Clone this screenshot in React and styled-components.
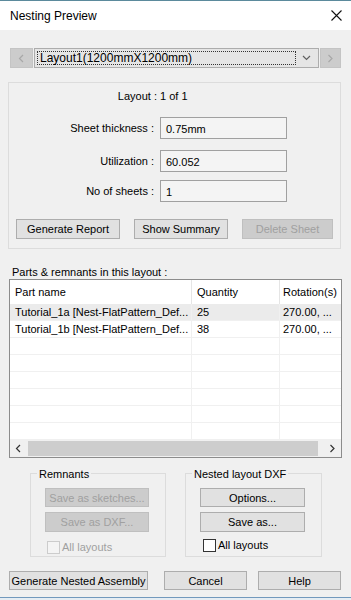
import React from "react";
import styled, { createGlobalStyle } from "styled-components";

const GlobalStyle = createGlobalStyle`
  html, body {
    margin: 0;
    padding: 0;
    background: #f0f0f0;
  }
  body {
    font-family: "Liberation Sans", Arial, sans-serif;
    font-size: 11px;
    color: #000;
  }
  * {
    box-sizing: border-box;
  }
`;

const rows = [
  { name: "Tutorial_1a [Nest-FlatPattern_Def...", qty: "25", rot: "270.00, ...", selected: true },
  { name: "Tutorial_1b [Nest-FlatPattern_Def...", qty: "38", rot: "270.00, ..." },
  {},
  {},
  {},
  {},
  {},
  {},
];

function CloseIcon() {
  return (
    <svg width="11" height="11" viewBox="0 0 11 11">
      <path d="M0.5 0.5 L10.5 10.5 M10.5 0.5 L0.5 10.5" stroke="#111" strokeWidth="1.1" fill="none" />
    </svg>
  );
}

function Chevron({ dir = "down", color = "#606060" }) {
  const d =
    dir === "down"
      ? "M1 1 L4.5 4.5 L8 1"
      : dir === "left"
      ? "M5 1 L1.5 4.5 L5 8"
      : "M1.5 1 L5 4.5 L1.5 8";
  const w = dir === "down" ? 9 : 7;
  const h = dir === "down" ? 6 : 9;
  return (
    <svg width={w} height={h} viewBox={`0 0 ${w} ${h}`}>
      <path d={d} stroke={color} strokeWidth="1.2" fill="none" />
    </svg>
  );
}

function App() {
  return (
    <>
      <GlobalStyle />
      <Window>
        <TitleBar>
          <span>Nesting Preview</span>
          <CloseButton>
            <CloseIcon />
          </CloseButton>
        </TitleBar>

        <Body>
          <NavRow>
            <NavButton $w={23}>
              <Chevron dir="left" color="#a8a8a8" />
            </NavButton>
            <Combo>
              <FocusText>Layout1(1200mmX1200mm)</FocusText>
              <DropArrow>
                <Chevron dir="down" />
              </DropArrow>
            </Combo>
            <NavButton $w={21}>
              <Chevron dir="right" color="#a8a8a8" />
            </NavButton>
          </NavRow>

          <InfoGroup>
            <FieldRow $mt={6}>
              <FieldLabel $shift={3}>Layout :</FieldLabel>
              <span>1 of 1</span>
            </FieldRow>
            <FieldRow $mt={14}>
              <FieldLabel>Sheet thickness :</FieldLabel>
              <ReadField>0.75mm</ReadField>
            </FieldRow>
            <FieldRow $mt={11}>
              <FieldLabel>Utilization :</FieldLabel>
              <ReadField>60.052</ReadField>
            </FieldRow>
            <FieldRow $mt={8}>
              <FieldLabel>No of sheets :</FieldLabel>
              <ReadField>1</ReadField>
            </FieldRow>
            <ActionRow>
              <Button $w={104} $h={20}>Generate Report</Button>
              <Button $w={94} $h={20}>Show Summary</Button>
              <Button $w={91} $h={20} disabled>
                Delete Sheet
              </Button>
            </ActionRow>
          </InfoGroup>

          <SectionLabel>Parts &amp; remnants in this layout :</SectionLabel>

          <ListBox>
            <ListHeader>
              <HeadCell $pl={5}>Part name</HeadCell>
              <HeadCell $pl={5}>Quantity</HeadCell>
              <HeadCell $pl={3} $last>
                Rotation(s)
              </HeadCell>
            </ListHeader>
            {rows.map((r, i) => (
              <ListRow key={i} $selected={r.selected}>
                <Cell $pl={5}>{r.name}</Cell>
                <Cell $pl={5}>{r.qty}</Cell>
                <Cell $pl={3} $last>
                  {r.rot}
                </Cell>
              </ListRow>
            ))}
            <HScroll>
              <ScrollArrow>
                <Chevron dir="left" color="#333" />
              </ScrollArrow>
              <ScrollTrack>
                <ScrollThumb />
              </ScrollTrack>
              <ScrollArrow>
                <Chevron dir="right" color="#333" />
              </ScrollArrow>
            </HScroll>
          </ListBox>

          <GroupsRow>
            <Frame $w={136}>
              <Caption>Remnants</Caption>
              <Button $w={104} $h={19} disabled>
                Save as sketches...
              </Button>
              <Button $w={104} $h={20} $mt={5} disabled>
                Save as DXF...
              </Button>
              <CheckRow $ml={2} $mt={9} $disabled>
                <CheckBox $disabled />
                All layouts
              </CheckRow>
            </Frame>
            <Frame $w={137}>
              <Caption>Nested layout DXF</Caption>
              <Button $w={105} $h={19}>Options...</Button>
              <Button $w={105} $h={20} $mt={5}>
                Save as...
              </Button>
              <CheckRow $ml={3} $mt={7}>
                <CheckBox />
                All layouts
              </CheckRow>
            </Frame>
          </GroupsRow>

          <Footer>
            <Button $w={139} $h={19}>Generate Nested Assembly</Button>
            <Button $w={83} $h={19} $ml={16}>
              Cancel
            </Button>
            <Button $w={83} $h={19} $ml={11}>
              Help
            </Button>
          </Footer>
        </Body>
        <BottomEdge />
      </Window>
    </>
  );
}

const Window = styled.div`
  width: 351px;
  height: 600px;
  display: flex;
  flex-direction: column;
  background: #f0f0f0;
  border-top: 1px solid #5b8a9c;
  overflow: hidden;
`;

const TitleBar = styled.div`
  height: 29px;
  flex: none;
  background: #fff;
  display: flex;
  align-items: center;
  justify-content: space-between;
  padding: 0 9px 0 10px;
  font-size: 12px;
  color: #000;
`;

const CloseButton = styled.div`
  display: flex;
  align-items: center;
  padding-bottom: 1px;
`;

const Body = styled.div`
  flex: 1;
  display: flex;
  flex-direction: column;
  padding: 0 10px 0 8px;
`;

const NavRow = styled.div`
  display: flex;
  gap: 1px;
  height: 20px;
  margin: 18px 0 0 2px;
`;

const NavButton = styled.div`
  width: ${(p) => p.$w}px;
  flex: none;
  background: #cccccc;
  border: 1px solid #c4c4c4;
  display: flex;
  align-items: center;
  justify-content: center;
`;

const Combo = styled.div`
  flex: 1;
  display: flex;
  padding: 2px;
  background: #e5e5e5;
  border: 1px solid #acacac;
`;

const FocusText = styled.div`
  flex: 1;
  border: 1px dotted #333;
  padding-left: 2px;
  font-size: 12px;
  line-height: 13px;
  white-space: nowrap;
`;

const DropArrow = styled.div`
  width: 20px;
  display: flex;
  align-items: center;
  justify-content: center;
`;

const InfoGroup = styled.div`
  margin-top: 14px;
  height: 167px;
  border: 1px solid #dcdcdc;
  display: flex;
  flex-direction: column;
`;

const FieldRow = styled.div`
  display: grid;
  grid-template-columns: 145px 127px;
  column-gap: 6px;
  align-items: center;
  margin-top: ${(p) => p.$mt}px;
  line-height: 14px;
`;

const FieldLabel = styled.span`
  text-align: right;
  margin-right: ${(p) => -(p.$shift || 0)}px;
`;

const ReadField = styled.div`
  height: 22px;
  border: 1px solid #a0a0a0;
  background: #f4f4f4;
  padding-left: 5px;
  display: flex;
  align-items: center;
  padding-top: 1px;
`;

const ActionRow = styled.div`
  display: flex;
  gap: 14px;
  margin-top: 17px;
  padding-left: 7px;
`;

const Button = styled.button`
  width: ${(p) => p.$w}px;
  height: ${(p) => p.$h}px;
  margin-top: ${(p) => p.$mt || 0}px;
  margin-left: ${(p) => p.$ml || 0}px;
  flex: none;
  padding: 0;
  font-family: inherit;
  font-size: 11px;
  color: #000;
  background: #e1e1e1;
  border: 1px solid #adadad;
  white-space: nowrap;

  &:disabled {
    color: #a0a0a0;
    background: #cccccc;
    border-color: #bfbfbf;
  }
`;

const SectionLabel = styled.div`
  margin-top: 17px;
  padding-left: 4px;
  line-height: 13px;
  height: 13px;
`;

const ListBox = styled.div`
  margin: 0 -1px 0 1px;
  height: 179px;
  border: 1px solid #8c8c8c;
  background: #fff;
  display: flex;
  flex-direction: column;
`;

const columns = "182px 88px 1fr";

const ListHeader = styled.div`
  display: grid;
  grid-template-columns: ${columns};
  height: 24px;
  flex: none;
`;

const HeadCell = styled.div`
  padding-left: ${(p) => p.$pl}px;
  display: flex;
  align-items: center;
  border-right: ${(p) => (p.$last ? "none" : "1px solid #e5e5e5")};
  white-space: nowrap;
  overflow: hidden;
`;

const ListRow = styled.div`
  display: grid;
  grid-template-columns: ${columns};
  height: 17px;
  flex: none;
  background: ${(p) => (p.$selected ? "#ebebeb" : "#fff")};
  border-bottom: 1px solid #f0f0f0;
`;

const Cell = styled.div`
  padding-left: ${(p) => p.$pl}px;
  display: flex;
  align-items: center;
  white-space: nowrap;
  overflow: hidden;
  border-right: ${(p) => (p.$last ? "none" : "1px solid #f0f0f0")};
`;

const HScroll = styled.div`
  height: 17px;
  flex: none;
  display: flex;
  background: #f0f0f0;
`;

const ScrollArrow = styled.div`
  width: 17px;
  display: flex;
  align-items: center;
  justify-content: center;
`;

const ScrollTrack = styled.div`
  flex: 1;
  padding: 1px 6px 1px 1px;
  display: flex;
`;

const ScrollThumb = styled.div`
  flex: 1;
  background: #cdcdcd;
`;

const GroupsRow = styled.div`
  display: flex;
  gap: 19px;
  margin-top: 15px;
  padding-left: 22px;
`;

const Frame = styled.div`
  position: relative;
  width: ${(p) => p.$w}px;
  height: 84px;
  padding: 14px 0 0 14px;
  border: 1px solid #dcdcdc;
  display: flex;
  flex-direction: column;
`;

const Caption = styled.span`
  position: absolute;
  top: -6px;
  left: 6px;
  padding: 0 2px;
  line-height: 12px;
  background: #f0f0f0;
`;

const CheckRow = styled.label`
  display: flex;
  align-items: center;
  gap: 2px;
  margin-top: ${(p) => p.$mt}px;
  margin-left: ${(p) => p.$ml}px;
  color: ${(p) => (p.$disabled ? "#a0a0a0" : "#000")};
  line-height: 13px;
`;

const CheckBox = styled.span`
  width: 13px;
  height: 13px;
  background: ${(p) => (p.$disabled ? "#f4f4f4" : "#fff")};
  border: 1px solid ${(p) => (p.$disabled ? "#cccccc" : "#333")};
`;

const Footer = styled.div`
  display: flex;
  margin-top: 14px;
  padding-left: 1px;
`;

const BottomEdge = styled.div`
  height: 3px;
  flex: none;
  border-top: 1px solid #7299bd;
  background: #e6edf3;
`;

export default App;
